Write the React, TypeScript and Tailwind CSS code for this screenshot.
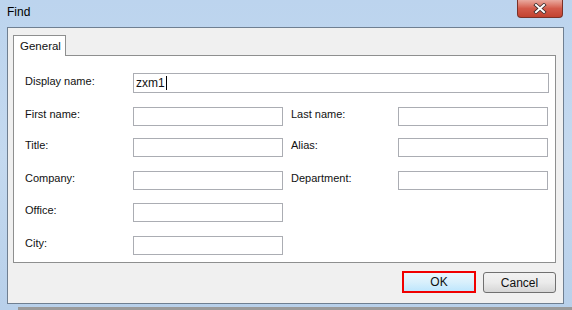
const rows = [
  { left: "First name:", right: "Last name:", mt: "mt-[14px]" },
  { left: "Title:", right: "Alias:", mt: "mt-[12px]" },
  { left: "Company:", right: "Department:", mt: "mt-[14px]" },
  { left: "Office:", right: null, mt: "mt-[13px]" },
  { left: "City:", right: null, mt: "mt-[14px]" },
];

const Field = () => (
  <div className="w-[150px] h-[19px] border border-[#abadb3] bg-white" />
);

const CloseButton = () => (
  <div className="absolute top-0 right-[9px] w-[46px] h-[18px] rounded-b-[4px] border border-t-0 border-[#7a3128] bg-gradient-to-b from-[#e9a99f] via-[#d35a4a] to-[#c2422f] flex items-center justify-center">
    <svg width="14" height="11" viewBox="0 0 14 11">
      <path
        d="M3 2 L11 9 M11 2 L3 9"
        stroke="#3a2a2a"
        strokeWidth="3.6"
        strokeLinecap="square"
      />
      <path
        d="M3 2 L11 9 M11 2 L3 9"
        stroke="#ffffff"
        strokeWidth="2"
        strokeLinecap="square"
      />
    </svg>
  </div>
);

const App = () => {
  return (
    <div
      className="relative w-[572px] h-[310px] overflow-hidden bg-gradient-to-b from-[#bcd4ee] via-[#c4d9ef] to-[#b8d0ea] text-[11px] text-[#111]"
      style={{ fontFamily: '"Liberation Sans", Arial, sans-serif' }}
    >
      {/* title bar */}
      <div className="h-[27px] flex items-start pl-[7px] pt-[5px]">
        <span className="text-[12px] leading-[14px] text-black">Find</span>
      </div>
      <CloseButton />

      {/* client area */}
      <div className="ml-[7px] mr-[8px] h-[277px] border border-[#6f7f91] bg-[#f0f0f0] flex flex-col pl-[5px] pr-[8px] pt-[7px]">
        {/* tab strip */}
        <div className="flex h-[21px]">
          <div className="w-[53px] h-[21px] bg-white border border-b-0 border-[#8e8f8f] flex items-center pl-[6px] relative z-10">
            <span className="leading-[13px] text-[11.5px]">General</span>
          </div>
        </div>
        {/* panel */}
        <div className="-mt-px w-[543px] h-[208px] bg-white border border-[#8e8f8f] pl-[11px] pt-[17px] flex flex-col">
          <div className="flex items-start h-[20px]">
            <span className="w-[108px] pt-[1px] leading-[14px]">Display name:</span>
            <div className="w-[416px] h-[20px] border border-[#abadb3] bg-white flex items-center pl-[2px]">
              <span className="text-[12px] leading-[14px]">zxm1</span>
              <span className="w-px h-[14px] bg-black ml-px" />
            </div>
          </div>
          {rows.map((r) => (
            <div key={r.left} className={`flex items-start h-[19px] ${r.mt}`}>
              <span className="w-[108px] leading-[14px]">{r.left}</span>
              <Field />
              {r.right && (
                <>
                  <span className="w-[107px] ml-[8px] leading-[14px]">{r.right}</span>
                  <Field />
                </>
              )}
            </div>
          ))}
        </div>
        {/* buttons */}
        <div className="flex justify-end gap-[7px] mt-[8px]">
          <div className="w-[74px] h-[22px] border-2 border-[#f00000] bg-gradient-to-b from-[#eaf6fd] via-[#d9f0fc] to-[#bee6fd] flex items-center justify-center">
            <span className="text-[12px] leading-[14px]">OK</span>
          </div>
          <div className="w-[73px] h-[21px] mt-px rounded-[3px] border border-[#707070] bg-gradient-to-b from-[#f2f2f2] via-[#ebebeb] to-[#d6d6d6] flex items-center justify-center mr-[-1px]">
            <span className="text-[12px] leading-[14px]">Cancel</span>
          </div>
        </div>
      </div>
      {/* shadow strip below the window */}
      <div className="absolute left-[18px] right-0 bottom-0 h-[3px] bg-[#9a9a9a]" />
    </div>
  );
};

export default App;
